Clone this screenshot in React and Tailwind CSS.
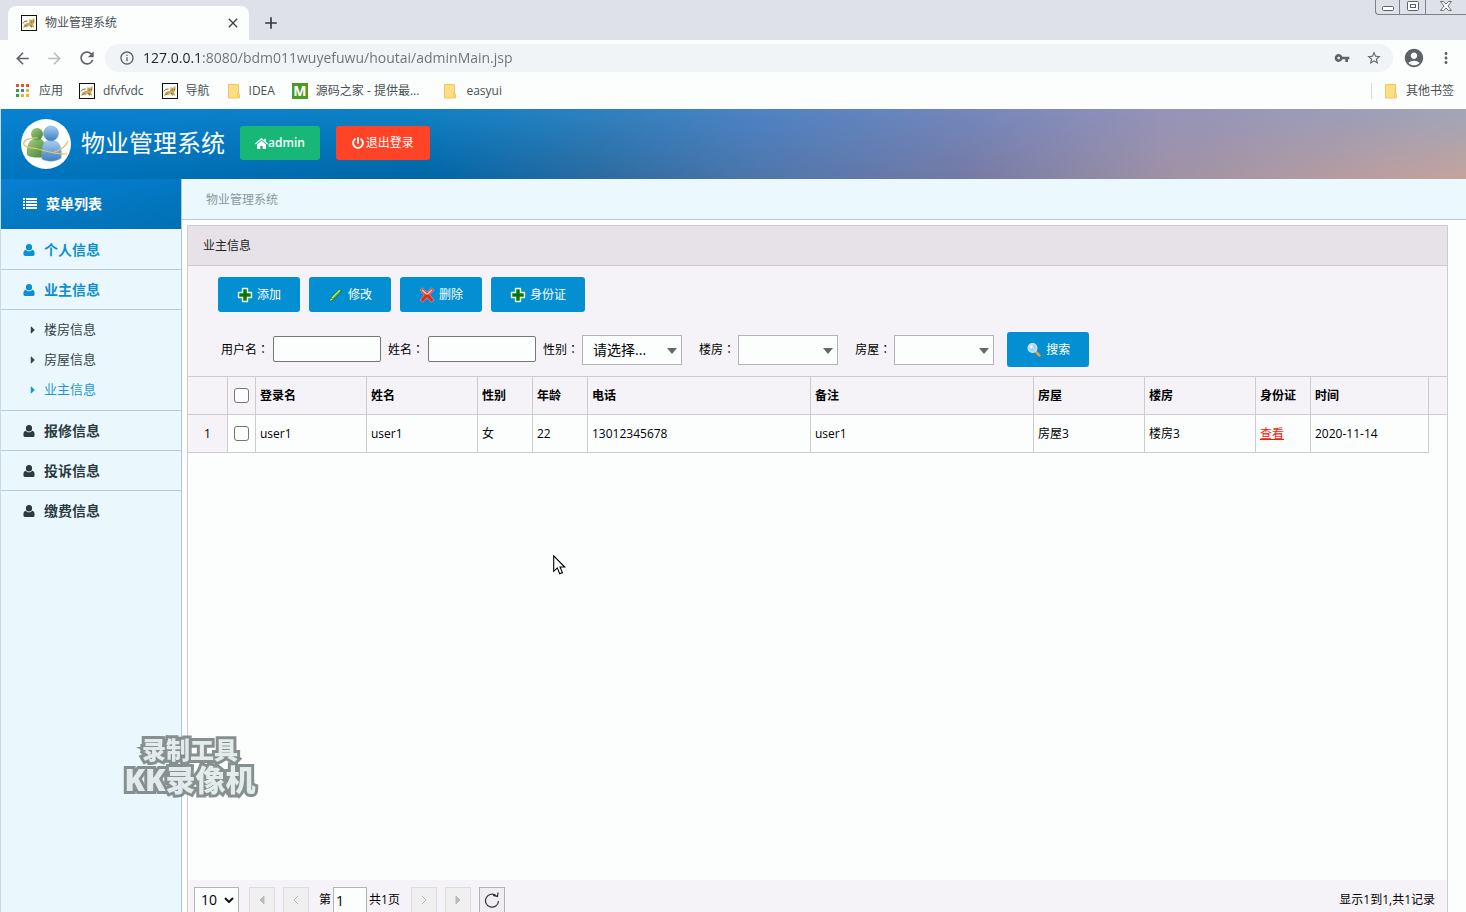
import React from "react";
import {
  MdArrowBack, MdArrowForward, MdRefresh, MdInfoOutline, MdVpnKey, MdStarBorder,
  MdAccountCircle, MdMoreVert, MdClose, MdAdd,
} from "react-icons/md";
import { FaPowerOff, FaCaretRight } from "react-icons/fa";

function CatIcon() {
  return (
    <svg viewBox="0 0 16 16" className="size-4 shrink-0" aria-hidden="true">
      <rect x="0.5" y="0.5" width="15" height="15" fill="#fdfdf8" stroke="#111" />
      <path d="M2 12.500 L3.500 9.500 Q5 7.500 8 8 L8.500 4 L10.500 5 L13.500 3 L13.500 7 L12 9.500 L13.500 12.500 L10.500 12 L8 10.500 L6 12.500 L4.500 11.500 Z" fill="#cfa75c" />
      <path d="M2 8.500 Q3 5.500 6.500 6 M3 12.500 L5.500 10 M9.500 10 L10.500 12.500" stroke="#6b543a" strokeWidth="0.900" fill="none" />
      <path d="M10 7h.8M12.300 6.500h.7" stroke="#4a3a28" strokeWidth="1" />
    </svg>
  );
}

function FolderIcon() {
  return (
    <svg viewBox="0 0 14 16" className="h-4 w-[14px] shrink-0" aria-hidden="true">
      <path d="M1.500 1.500h10v9l1 .5v4h-11z" fill="#fddf83" stroke="#efc566" />
      <path d="M10.500 14v-3.500l1-2" fill="none" stroke="#efc566" />
    </svg>
  );
}

function AppsIcon() {
  const colors = ["#e2533f", "#e2533f", "#e2533f", "#2f9e58", "#3a7de0", "#efb32a", "#2f9e58", "#efb32a", "#efb32a"];
  return (
    <svg viewBox="0 0 13 13" className="size-[13px]" aria-hidden="true">
      {colors.map((c, i) => (
        <rect key={i} x={(i % 3) * 5} y={Math.floor(i / 3) * 5} width="3" height="3" fill={c} />
      ))}
    </svg>
  );
}

function UserIcon() {
  return (
    <svg viewBox="0 0 12 12" className="size-3" fill="currentColor" aria-hidden="true">
      <path d="M6 0a3.100 3.300 0 0 1 3.100 3.300A3.100 3.300 0 0 1 6 6.600 3.100 3.300 0 0 1 2.900 3.300 3.100 3.300 0 0 1 6 0z" />
      <path d="M2.900 5.700C1 5.900.4 7.600.4 9.900.4 11.200 1.200 12 2.400 12h7.200c1.200 0 2-.8 2-2.100 0-2.300-.6-4-2.500-4.200C8.300 6.700 7.200 7.200 6 7.200s-2.300-.5-3.100-1.500z" />
    </svg>
  );
}

function HomeIcon() {
  return (
    <svg viewBox="0 0 13 11" className="h-[11px] w-[13px]" fill="currentColor" aria-hidden="true">
      <path d="M6.500 0L0 5.500l.8 1 5.700-4.800 5.700 4.800.8-1-2-1.700V.8H9.200v1.500z" />
      <path d="M6.500 2.700L2 6.500V10.300c0 .4.300.7.700.7h2.600V8h2.400v3h2.600c.4 0 .7-.3.700-.7V6.500z" />
    </svg>
  );
}

function PlusIcon() {
  return (
    <svg viewBox="0 0 16 16" className="size-4" aria-hidden="true">
      <path d="M5.500 1.500h5v4h4v5h-4v4h-5v-4h-4v-5h4z" fill="#138a17" stroke="#e9f7dc" strokeWidth="1.400" strokeLinejoin="round" />
      <path d="M8 3v10M3 8h10" stroke="#0b6c10" strokeWidth="1.500" />
    </svg>
  );
}

function PencilIcon() {
  return (
    <svg viewBox="0 0 16 16" className="size-4" aria-hidden="true">
      <path d="M2 14l1-3.500L11.500 2.200l2.300 1.600L5.500 13z" fill="#3fae3a" stroke="#1c6f2a" strokeWidth="0.800" />
      <path d="M4 11L12 3" stroke="#b8ec8e" strokeWidth="1.200" />
      <path d="M2 14l.8-2.500 1.700 1.200z" fill="#f3dfb0" />
    </svg>
  );
}

function CrossIcon() {
  return (
    <svg viewBox="0 0 16 16" className="size-4" aria-hidden="true">
      <path d="M1 3l2.500-2L8 5.200 12.500 1 15 3l-4.200 5L15 13l-2.500 2.200L8 10.800 3.500 15.200 1 13l4.200-5z" fill="#e62a18" stroke="#f6a79d" strokeWidth="0.600" />
      <path d="M2.500 3.200l1-1L8 6.600l4.500-4.400 1 1L9.500 7.500h-3z" fill="#fbc4bb" />
    </svg>
  );
}

function SearchIcon() {
  return (
    <svg viewBox="0 0 16 16" className="size-4" aria-hidden="true">
      <path d="M9 9l4.500 4.500" stroke="#d9a24b" strokeWidth="2.500" strokeLinecap="round" />
      <circle cx="6.500" cy="6" r="4.300" fill="#a9d4fa" stroke="#d9e9f8" strokeWidth="1.300" />
      <circle cx="5.300" cy="4.800" r="1.600" fill="#f1f9ff" />
    </svg>
  );
}

function ListIcon() {
  return (
    <svg viewBox="0 0 14 12" className="h-3 w-[14px]" fill="currentColor" aria-hidden="true">
      {[0, 3, 6, 9].map((y) => (
        <g key={y}>
          <rect x="0" y={y} width="2" height="2" />
          <rect x="3" y={y} width="11" height="2" />
        </g>
      ))}
    </svg>
  );
}

function Logo() {
  return (
    <svg viewBox="0 0 50 50" className="size-[50px] shrink-0" aria-hidden="true">
      <defs>
        <linearGradient id="green" x1="0" y1="0" x2="1" y2="1">
          <stop offset="0" stopColor="#a5cf83" />
          <stop offset="1" stopColor="#3d8434" />
        </linearGradient>
        <linearGradient id="blue" x1="0" y1="0" x2="0" y2="1">
          <stop offset="0" stopColor="#a5cdf0" />
          <stop offset="1" stopColor="#3b7fc0" />
        </linearGradient>
      </defs>
      <circle cx="25" cy="25" r="25" fill="#fdfefe" />
      <path d="M6 36c-1-8 2-16 7-16h7c4 2 5 9 4 18-7 1-14 1-18-2z" fill="url(#green)" />
      <circle cx="16" cy="15" r="6" fill="url(#green)" />
      <path d="M21 40c-1-9 0-18 6-18h7c6 2 7 10 6 17-5 4-14 4-19 1z" fill="url(#blue)" stroke="#6f9fcc" strokeWidth="0.500" />
      <circle cx="30" cy="14.500" r="7.500" fill="url(#blue)" stroke="#6f9fcc" strokeWidth="0.500" />
      <path d="M17 19C8 18 1 22 3 26c3 3 9 3 14 4 8 2 15 5 29 5M47 22c-2 5-7 9-14 11" fill="none" stroke="#e3bd70" strokeWidth="1.200" />
    </svg>
  );
}

function WindowButtons() {
  return (
    <div className="flex h-[15px] overflow-hidden rounded-bl border-b border-l border-[#7c8189] text-[#5d6269]">
      <button aria-label="最小化" className="flex w-6 items-end justify-center border-r border-[#7c8189] pb-[3px]">
        <svg viewBox="0 0 12 5" className="h-[5px] w-3"><rect x="0.500" y="0.500" width="11" height="4" rx="1" fill="#fff" stroke="currentColor" /></svg>
      </button>
      <button aria-label="最大化" className="flex w-[26px] items-center justify-center border-r border-[#7c8189] pb-[2px]">
        <svg viewBox="0 0 12 10" className="h-[10px] w-3" fill="#fff" stroke="currentColor"><rect x="0.500" y="0.500" width="11" height="9" rx="1" /><rect x="3.500" y="3.500" width="5" height="3" /></svg>
      </button>
      <button aria-label="关闭窗口" className="flex w-10 items-center justify-center pb-[2px]">
        <svg viewBox="0 0 12 10" className="h-[10px] w-3"><path d="M.5.500h3L6 3 8.500.500h3L8 5l3.500 4.500h-3L6 7 3.500 9.500h-3L4 5z" fill="#fff" stroke="currentColor" strokeWidth="0.900" /></svg>
      </button>
    </div>
  );
}

function Bookmark({ icon, children, className = "gap-2" }) {
  return (
    <a href="#" className={"flex items-center whitespace-nowrap " + className}>
      {icon}
      <span>{children}</span>
    </a>
  );
}

function Browser() {
  return (
    <div className="shrink-0 bg-[#fcfefe] text-[#4a4e53]">
      <div className="flex h-10 items-start bg-[#dfe1e8]">
        <div className="ml-2 mt-[6px] flex h-[34px] w-[241px] items-center rounded-t-lg bg-[#fcfefe] pl-[13px] pr-2 text-xs">
          <CatIcon />
          <span className="ml-2 grow">物业管理系统</span>
          <button aria-label="关闭标签页"><MdClose className="size-4 text-[#3e4246]" /></button>
        </div>
        <button aria-label="新标签页" className="ml-3 mt-[13px]"><MdAdd className="size-5 text-[#35393d]" /></button>
        <div className="ml-auto"><WindowButtons /></div>
      </div>
      <div className="flex h-9 items-center pl-[13px] pr-[11px] text-[#5f6368]">
        <button aria-label="后退"><MdArrowBack className="size-[19px]" /></button>
        <button aria-label="前进" className="ml-[13px] text-[#b9bcbf]"><MdArrowForward className="size-[19px]" /></button>
        <button aria-label="刷新" className="ml-[13px]"><MdRefresh className="size-5" /></button>
        <div className="ml-2 flex h-7 grow items-center rounded-full bg-[#f1f4f6] pl-[14px] pr-[11px]">
          <MdInfoOutline className="size-4 shrink-0" />
          <input
            aria-label="地址栏"
            className="ml-2 min-w-0 grow bg-linear-to-r from-[#202124] from-[59px] to-[#6b7075] to-[59px] bg-clip-text text-sm text-transparent outline-none"
            defaultValue="127.0.0.1:8080/bdm011wuyefuwu/houtai/adminMain.jsp"
          />
          <MdVpnKey className="size-4" />
          <MdStarBorder className="ml-4 size-4" />
        </div>
        <button aria-label="用户" className="ml-[10px]"><MdAccountCircle className="size-[22px]" /></button>
        <button aria-label="更多" className="ml-3"><MdMoreVert className="size-[18px]" /></button>
      </div>
      <div className="flex h-[33px] items-center pb-1 pl-4 pr-3 text-xs">
        <Bookmark icon={<AppsIcon />} className="mr-4 gap-[10px]">应用</Bookmark>
        <Bookmark icon={<CatIcon />} className="mr-[18px] gap-2">dfvfvdc</Bookmark>
        <Bookmark icon={<CatIcon />} className="mr-[17px] gap-2">导航</Bookmark>
        <Bookmark icon={<FolderIcon />} className="mr-[17px] gap-2">IDEA</Bookmark>
        <Bookmark
          icon={<span className="flex size-4 items-center justify-center bg-[#4e9a22] text-sm font-bold text-white">M</span>}
          className="mr-6 gap-2"
        >
          源码之家 - 提供最...
        </Bookmark>
        <Bookmark icon={<FolderIcon />} className="gap-[9px]">easyui</Bookmark>
        <div className="ml-auto border-l border-[#d3d8dc] pl-3">
          <Bookmark icon={<FolderIcon />}>其他书签</Bookmark>
        </div>
      </div>
    </div>
  );
}

function SideItem({ active, last, children }) {
  return (
    <a
      href="#"
      className={
        "flex h-10 items-center border-b pl-[22px] text-sm font-bold " +
        (last ? "border-transparent " : "border-[#b5cbd8] ") +
        (active ? "text-[#0f8fcf]" : "text-[#2c3a42]")
      }
    >
      <UserIcon />
      <span className="ml-[9px]">{children}</span>
    </a>
  );
}

function SubItem({ active, children }) {
  return (
    <a href="#" className={"flex h-[30px] items-center pl-[26px] text-[13px] " + (active ? "text-[#1e97cf]" : "text-[#36434a]")}>
      <FaCaretRight className="size-3" />
      <span className="ml-[5px]">{children}</span>
    </a>
  );
}

function Sidebar() {
  return (
    <nav className="w-[181px] shrink-0 border-r border-[#a9c6da] bg-[#eaf8fe]">
      <h2 className="flex h-[50px] items-center bg-linear-to-br from-[#0880d2] to-[#0070b4] pl-[22px] text-sm font-bold text-white">
        <ListIcon />
        <span className="ml-[9px]">菜单列表</span>
      </h2>
      <div className="pt-px">
        <SideItem active>个人信息</SideItem>
        <SideItem active>业主信息</SideItem>
        <div className="border-b border-[#b5cbd8] py-[5px]">
          <SubItem>楼房信息</SubItem>
          <SubItem>房屋信息</SubItem>
          <SubItem active>业主信息</SubItem>
        </div>
        <SideItem>报修信息</SideItem>
        <SideItem>投诉信息</SideItem>
        <SideItem last>缴费信息</SideItem>
      </div>
    </nav>
  );
}

function ActionButton({ icon, children }) {
  return (
    <button className="flex h-[35px] items-center gap-1 whitespace-nowrap rounded-[3px] bg-[#038fd2] px-[19px] text-xs text-white">
      {icon}
      <span>{children}</span>
    </button>
  );
}

function FieldLabel({ id, children }) {
  return (
    <label htmlFor={id} className="whitespace-nowrap">
      {children}
      <span className="font-['Noto_Sans_CJK_TC',sans-serif]" lang="zh-TW">：</span>
    </label>
  );
}

function TextField({ id, label }) {
  return (
    <div className="flex items-center">
      <FieldLabel id={id}>{label}</FieldLabel>
      <input id={id} className="mb-px ml-1 h-[26px] w-[108px] rounded-[2px] border border-[#767676] bg-[#fcfefe] px-1" />
    </div>
  );
}

function ComboField({ id, label, value }) {
  return (
    <div className="flex items-center">
      <FieldLabel id={id}>{label}</FieldLabel>
      <div className="relative ml-[3px]">
        <select id={id} className="block h-[30px] w-[100px] appearance-none border border-[#b4b4b6] bg-[#fcfefe] pl-[10px] text-sm text-black">
          <option>{value}</option>
        </select>
        <svg viewBox="0 0 10 6" className="pointer-events-none absolute right-[5px] top-[13px] h-[6px] w-[10px]" aria-hidden="true">
          <path d="M0 0h10L5 6z" fill="#666" />
        </svg>
      </div>
    </div>
  );
}

const columns = [
  ["登录名", "user1"],
  ["姓名", "user1"],
  ["性别", "女"],
  ["年龄", "22"],
  ["电话", "13012345678"],
  ["备注", "user1"],
  ["房屋", "房屋3"],
  ["楼房", "楼房3"],
  ["身份证", "查看"],
  ["时间", "2020-11-14"],
];

function Check({ label }) {
  return (
    <input
      type="checkbox"
      aria-label={label}
      className="mx-auto block size-[15px] appearance-none rounded-[3px] border border-[#767676] bg-[#fcfefe]"
    />
  );
}

function OwnersTable() {
  return (
    <table className="w-full table-fixed border-separate border-spacing-0 text-left text-xs text-black">
      <colgroup>
        <col className="w-[40px]" />
        <col className="w-[28px]" />
        <col className="w-[111px]" />
        <col className="w-[111px]" />
        <col className="w-[55px]" />
        <col className="w-[55px]" />
        <col />
        <col />
        <col className="w-[111px]" />
        <col className="w-[111px]" />
        <col className="w-[55px]" />
        <col className="w-[118px]" />
        <col className="w-[18px]" />
      </colgroup>
      <thead>
        <tr className="h-[38px] bg-[#f5f3f7]">
          <td className="border-b border-r border-[#ccc]" />
          <td className="border-b border-r border-[#ccc]"><Check label="全选" /></td>
          {columns.map(([title]) => (
            <th key={title} scope="col" className="border-b border-r border-[#ccc] px-1 font-bold">{title}</th>
          ))}
          <td className="border-b border-[#ccc]" />
        </tr>
      </thead>
      <tbody>
        <tr className="h-[38px]">
          <td className="border-b border-r border-[#ccc] bg-[#f5f3f7] text-center">1</td>
          <td className="border-b border-r border-[#ccc]"><Check label="选择第1行" /></td>
          {columns.map(([title, value]) => (
            <td key={title} className="border-b border-r border-[#ccc] px-1">
              {value === "查看" ? <a href="#" className="text-[#f81c08] underline">{value}</a> : value}
            </td>
          ))}
          <td />
        </tr>
      </tbody>
    </table>
  );
}

function PageButton({ label, children, className = "border-[#dcdcde] bg-[#eff0ef] text-[#bbb]" }) {
  return (
    <button aria-label={label} className={"flex h-[26px] w-[26px] items-center justify-center border " + className}>
      <svg viewBox="0 0 16 16" className="size-4" fill="none" stroke="currentColor">{children}</svg>
    </button>
  );
}

function Pager() {
  return (
    <footer className="flex h-8 shrink-0 items-start overflow-hidden bg-[#f5f3f7] pl-[6px] pr-3 pt-[7px] text-xs text-black">
      <div className="relative">
        <select aria-label="每页条数" className="h-[26px] w-[45px] appearance-none border border-[#b4b4b6] bg-[#fcfefe] pl-[6px] text-sm">
          <option>10</option>
        </select>
        <svg viewBox="0 0 10 6" className="pointer-events-none absolute right-[5px] top-[10px] h-[6px] w-[10px]" aria-hidden="true">
          <path d="M1 1l4 4 4-4" fill="none" stroke="#111" strokeWidth="2" />
        </svg>
      </div>
      <div className="ml-[10px] flex gap-2">
        <PageButton label="首页"><path d="M10 4v8L6 8z" fill="currentColor" /></PageButton>
        <PageButton label="上一页"><path d="M10 4L6 8l4 4" /></PageButton>
      </div>
      <label htmlFor="page" className="ml-[10px] leading-[26px]">第</label>
      <input id="page" defaultValue="1" className="ml-[2px] h-[26px] w-[34px] border border-[#b4b4b6] bg-[#fcfefe] px-[2px] text-sm" />
      <span className="ml-[2px] leading-[26px]">共1页</span>
      <div className="ml-[11px] flex gap-2">
        <PageButton label="下一页"><path d="M6 4l4 4-4 4" /></PageButton>
        <PageButton label="末页"><path d="M6 4v8l4-4z" fill="currentColor" /></PageButton>
        <PageButton label="重新加载" className="border-[#b4b4b6] bg-[#f0eef2] text-[#333]">
          <path d="M12.500 4A6.500 6.500 0 1 0 14.500 9M9 3.500l4.500 1L14 .5" strokeWidth="1.200" />
        </PageButton>
      </div>
      <span className="ml-auto leading-[26px]">显示1到1,共1记录</span>
    </footer>
  );
}

function Owners() {
  return (
    <section className="ml-[5px] mr-[18px] mt-[5px] flex grow flex-col border-x border-t border-[#ccc] bg-[#fcfefe]">
      <h1 className="flex h-10 shrink-0 items-center border-b border-[#ccc] bg-[#e6e2e8] pl-[15px] text-xs text-[#222]">业主信息</h1>
      <div className="shrink-0 border-b border-[#ccc] bg-[#f5f3f7] pb-[9px] pl-[30px] pt-[11px] text-xs text-black">
        <div className="flex gap-[9px]">
          <ActionButton icon={<PlusIcon />}>添加</ActionButton>
          <ActionButton icon={<PencilIcon />}>修改</ActionButton>
          <ActionButton icon={<CrossIcon />}>删除</ActionButton>
          <ActionButton icon={<PlusIcon />}>身份证</ActionButton>
        </div>
        <form className="mt-5 flex h-[35px] items-center gap-[7px] pl-[3px]">
          <TextField id="user" label="用户名" />
          <TextField id="name" label="姓名" />
          <div className="flex gap-[17px]">
            <ComboField id="sex" label="性别" value="请选择..." />
            <ComboField id="building" label="楼房" value="" />
            <ComboField id="house" label="房屋" value="" />
          </div>
          <div className="ml-[6px]"><ActionButton icon={<SearchIcon />}>搜索</ActionButton></div>
        </form>
      </div>
      <OwnersTable />
      <div className="grow" />
      <Pager />
    </section>
  );
}

function Header() {
  return (
    <header className="relative isolate flex h-[70px] shrink-0 items-center bg-[linear-gradient(90deg,#0880d2_0%,#0d7fc2_28%,#2f7fbe_41%,#4f82c2_52%,#7486ba_66%,#9692b8_79%,#a3a5b6_100%)] pb-[2px] pl-5 text-white before:absolute before:inset-0 before:-z-10 before:bg-[linear-gradient(90deg,#0075bd_0%,#0065a4_29%,#2c6b9f_41%,#4f76ab_52%,#757aa5_66%,#a092a4_80%,#c6a39c_100%)] before:[mask-image:linear-gradient(transparent_10%,black)]">
      <div className="pt-[2px]"><Logo /></div>
      <span className="ml-[10px] text-2xl">物业管理系统</span>
      <button className="ml-[15px] flex h-[34px] items-center rounded-[3px] bg-[#16b777] px-[15px] text-xs font-semibold">
        <HomeIcon />
        admin
      </button>
      <button className="ml-4 flex h-[34px] items-center gap-[2px] rounded-[3px] bg-[#ff4326] px-4 text-xs">
        <FaPowerOff className="size-3" />
        退出登录
      </button>
    </header>
  );
}

function Watermark() {
  return (
    <div className="pointer-events-none absolute left-[120px] top-[736px] w-[140px] text-center font-black text-[#e2e9ea] opacity-90 [-webkit-text-stroke:6px_#7b8585] [paint-order:stroke_fill] [stroke-linejoin:round]">
      <div className="text-2xl leading-7">录制工具</div>
      <div className="whitespace-nowrap text-[30px] leading-8">KK录像机</div>
    </div>
  );
}

function Pointer() {
  return (
    <svg viewBox="0 0 13 20" className="pointer-events-none absolute left-[553px] top-[555px] h-5 w-[13px]" aria-hidden="true">
      <path d="M.7.8v15.500l3.600-3.400 2.400 5.800 2.700-1.100-2.400-5.600h4.700z" fill="#fff" stroke="#000" strokeWidth="1.100" />
    </svg>
  );
}

export default function App() {
  return (
    <div className="relative flex h-screen flex-col overflow-hidden bg-[#fcfefe] font-['Open_Sans','Noto_Sans_CJK_SC',sans-serif]">
      <Browser />
      <div className="flex min-h-0 grow flex-col border-l border-[#c6dbe6]">
        <Header />
        <div className="flex min-h-0 grow">
          <Sidebar />
          <main className="flex min-w-0 grow flex-col">
            <div className="flex h-[41px] shrink-0 items-center border-b border-[#b5cbd8] bg-[#ebf8fd] pl-6 pt-px text-xs text-[#8b989e]">物业管理系统</div>
            <Owners />
          </main>
        </div>
      </div>
      <Watermark />
      <Pointer />
    </div>
  );
}
